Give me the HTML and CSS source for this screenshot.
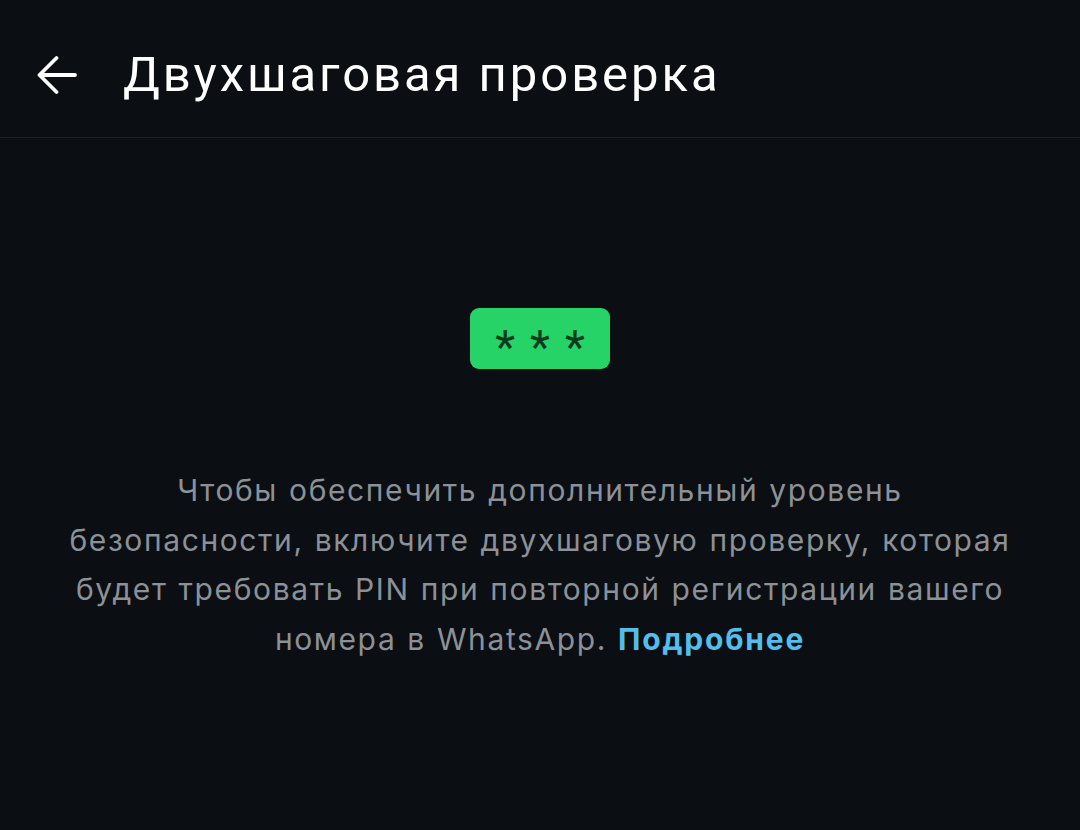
FILE: index.html
```html
<!DOCTYPE html>
<html lang="ru">
<head>
<meta charset="utf-8">
<link rel="stylesheet" href="styles.css">
</head>
<body>
<div class="app">
  <header class="topbar">
    <button class="back" aria-label="Назад">
      <svg width="40" height="40" viewBox="0 0 40 40"><path d="M38 20H4M19.5 3L2.5 20 19.5 37" fill="none" stroke="#ffffff" stroke-width="3.8" stroke-linecap="round" stroke-linejoin="round"/></svg>
    </button>
    <h1 class="title">Двухшаговая проверка</h1>
  </header>
  <main class="content">
    <div class="pin-badge"><span>*</span><span>*</span><span>*</span></div>
    <p class="desc">Чтобы обеспечить дополнительный уровень безопасности, включите двухшаговую проверку, которая будет требовать PIN при повторной регистрации вашего номера в WhatsApp. <a class="more" href="#">Подробнее</a></p>
  </main>
</div>
</body>
</html>
```
FILE: styles.css
```css
html, body {
  margin: 0;
  padding: 0;
  background: #0b0e12;
}
.app {
  width: 1080px;
  height: 830px;
  background: #0b0e12;
  overflow: hidden;
}
.topbar {
  height: 138px;
  box-sizing: border-box;
  border-bottom: 1px solid #1d2227;
  display: flex;
  align-items: center;
  padding: 12px 0 0 37px;
}
.back {
  background: none;
  border: 0;
  padding: 0;
  width: 40px;
  height: 40px;
  display: flex;
  align-items: center;
  justify-content: center;
}
.title {
  margin: 0 0 0 46px;
  font-family: Roboto, "Noto Sans", sans-serif;
  font-weight: 400;
  font-size: 49px;
  color: #ffffff;
  letter-spacing: 2.95px;
}
.content {
  display: flex;
  flex-direction: column;
  align-items: center;
  padding-top: 170px;
}
.pin-badge {
  width: 140px;
  height: 61px;
  box-sizing: border-box;
  background: #25d366;
  border-radius: 9px;
  display: flex;
  align-items: center;
  justify-content: center;
  gap: 15px;
  font-family: Roboto, sans-serif;
  font-size: 46px;
  font-weight: 400;
  color: #0c3a1e;
}
.pin-badge span {
  display: block;
  line-height: 1;
  margin-top: 16px;
}
.desc {
  margin: 97px 0 0;
  width: 964px;
  text-align: center;
  font-family: Inter, "Noto Sans", sans-serif;
  font-size: 30px;
  line-height: 49.5px;
  letter-spacing: 1.6px;
  word-spacing: 1px;
  color: #8b9197;
}
.more {
  color: #53bdeb;
  font-weight: 700;
  text-decoration: none;
  letter-spacing: 1.8px;
}
```
